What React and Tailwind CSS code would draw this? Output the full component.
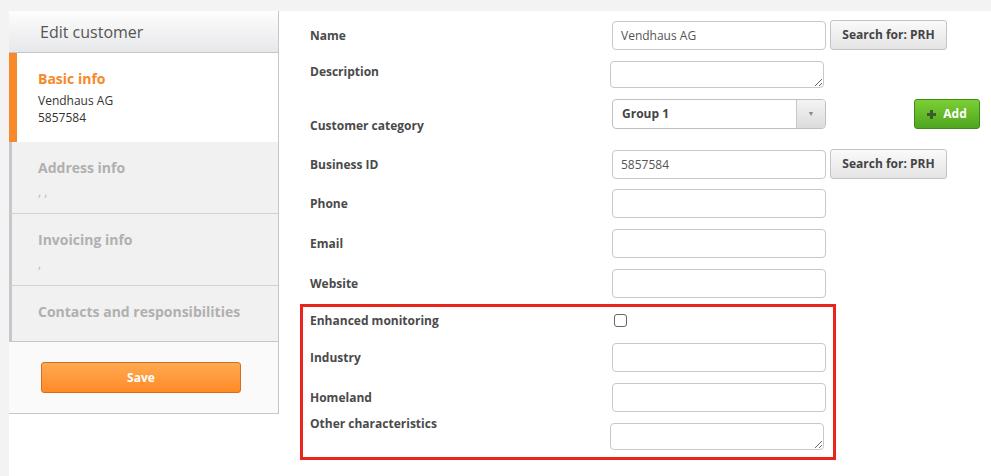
import React from 'react';

const font = { fontFamily: '"Open Sans", "Noto Sans", sans-serif' };

const inputCls =
  'h-[29px] w-[214px] rounded-[4px] border border-[#c8c8c8] bg-white px-2 text-[12px] text-[#555] outline-none';

const searchBtnCls =
  'ml-[4px] h-[30px] w-[117px] rounded-[3px] border border-[#c4c4c4] bg-gradient-to-b from-[#fafafa] to-[#e4e4e4] text-[12px] font-bold text-[#444]';

const textareaCls = 'h-[27px] w-[214px] rounded-[4px] border border-[#c8c8c8] bg-white outline-none';

const SideSection = ({ title, sub, height, last }) => (
  <div
    className={`flex flex-col border-l-[3px] border-l-[#c4c8cc] bg-[#f1f1f1] pl-[26px] pt-[16px] ${
      last ? '' : 'border-b border-b-[#d2d2d2]'
    }`}
    style={{ height }}
  >
    <div className="text-[14px] font-bold leading-[20px] text-[#b0b0b0]">{title}</div>
    {sub && <div className="mt-[5px] text-[12px] leading-[17px] text-[#b8b8b8]">{sub}</div>}
  </div>
);

const Row = ({ label, children, className = '', labelClass = '', narrow }) => (
  <div className={`flex ${className}`}>
    <div
      className={`${narrow ? 'w-[300px]' : 'w-[302px]'} shrink-0 text-[12px] font-bold leading-[17px] text-[#4a4a4a] ${labelClass}`}
    >
      {label}
    </div>
    {children}
  </div>
);

export default function App() {
  return (
    <div className="flex h-[476px] w-[991px] overflow-hidden bg-[#f3f3f3] pt-[11px] pl-[9px]" style={font}>
      <div className="flex flex-1 bg-white">
        {/* Left panel */}
        <div className="w-[270px] shrink-0 self-start border-r border-b border-[#c4c8cc]">
          <div className="flex h-[42px] items-center rounded-tl-[3px] border-b border-[#c4c8cc] bg-gradient-to-b from-[#fdfdfd] to-[#e7e8ea] pl-[31px] text-[16px] text-[#555]">
            Edit customer
          </div>
          <div className="flex h-[89px] flex-col border-l-[8px] border-[#f7892a] bg-white pl-[21px] pt-[16px]">
            <div className="text-[14px] font-bold leading-[20px] text-[#f7892a]">Basic info</div>
            <div className="mt-[3px] text-[12px] leading-[17px] text-[#333]">Vendhaus AG</div>
            <div className="text-[12px] leading-[17px] text-[#333]">5857584</div>
          </div>
          <SideSection title="Address info" sub=", ," height={72} />
          <SideSection title="Invoicing info" sub="," height={72} />
          <SideSection title="Contacts and responsibilities" height={55} last />
          <div className="h-[72px] border-t border-[#c4c8cc] bg-[#fafafa] pl-[32px] pt-[20px]">
            <button className="h-[31px] w-[200px] rounded-[3px] border border-[#d46e1c] bg-gradient-to-b from-[#ffaa50] to-[#ff8a24] text-[12px] font-bold text-white">
              Save
            </button>
          </div>
        </div>

        {/* Form */}
        <div className="flex flex-1 flex-col pl-[21px] pt-[9px]">
          <Row label="Name" className="items-center pl-[10px]">
            <input className={inputCls} defaultValue="Vendhaus AG" />
            <button className={searchBtnCls}>Search for: PRH</button>
          </Row>

          <Row label="Description" narrow className="mt-[11px] items-center pl-[10px]" labelClass="-mt-[6px]">
            <textarea className={textareaCls} />
          </Row>

          <Row label="Customer category" className="mt-[11px] items-start pl-[10px]" labelClass="mt-[18px]">
            <div className="flex h-[30px] w-[214px] overflow-hidden rounded-[4px] border border-[#c0c0c0] bg-white">
              <div className="flex flex-1 items-center pl-[9px] text-[12px] font-bold text-[#444]">Group 1</div>
              <div className="flex w-[29px] items-center justify-center border-l border-[#c8c8c8] bg-gradient-to-b from-[#f4f4f4] to-[#dcdcdc]">
                <span className="text-[7px] text-[#888]">▼</span>
              </div>
            </div>
            <button className="ml-[88px] flex h-[30px] w-[66px] items-center justify-center gap-[7px] rounded-[3px] border border-[#3d8a17] bg-gradient-to-b from-[#7ccf35] to-[#4fa51f] text-[12px] font-bold text-white">
              <svg width="9" height="9" viewBox="0 0 9 9">
                <path d="M3 0h3v3h3v3H6v3H3V6H0V3h3z" fill="#3c5a2a" />
              </svg>
              Add
            </button>
          </Row>

          <Row label="Business ID" className="mt-[15px] items-center pl-[10px]">
            <input className={inputCls} defaultValue="5857584" />
            <button className={searchBtnCls}>Search for: PRH</button>
          </Row>
          <Row label="Phone" className="mt-[10px] items-center pl-[10px]">
            <input className={inputCls} />
          </Row>
          <Row label="Email" className="mt-[11px] items-center pl-[10px]">
            <input className={inputCls} />
          </Row>
          <Row label="Website" className="mt-[11px] items-center pl-[10px]">
            <input className={inputCls} />
          </Row>

          <div className="mt-[6px] flex h-[156px] w-[536px] flex-col border-[3px] border-[#e8241d] pl-[7px]">
            <Row label="Enhanced monitoring" className="mt-[5px] items-center">
              <div className="ml-[2px] h-[13px] w-[13px] rounded-[3px] border border-[#666] bg-white" />
            </Row>
            <Row label="Industry" className="mt-[14px] items-center">
              <input className={inputCls} />
            </Row>
            <Row label="Homeland" className="mt-[11px] items-center">
              <input className={inputCls} />
            </Row>
            <Row label="Other characteristics" narrow className="mt-[3px] items-start">
              <textarea className={`mt-[8px] ${textareaCls}`} />
            </Row>
          </div>
        </div>
      </div>
    </div>
  );
}
